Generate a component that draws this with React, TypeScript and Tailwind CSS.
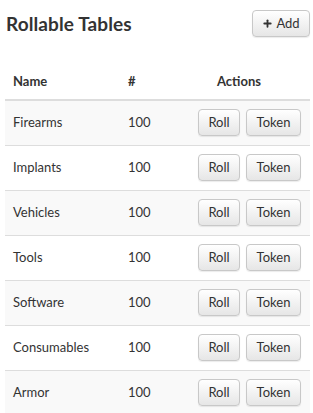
import { Plus } from "lucide-react";

const ROWS = [
  { name: "Firearms", count: 100 },
  { name: "Implants", count: 100 },
  { name: "Vehicles", count: 100 },
  { name: "Tools", count: 100 },
  { name: "Software", count: 100 },
  { name: "Consumables", count: 100 },
  { name: "Armor", count: 100 },
];

const btn =
  "rounded-[4px] border border-[#c8c8c8] bg-gradient-to-b from-white to-[#e6e6e6] text-[13px] text-[#333] shadow-[0_1px_1px_rgba(0,0,0,0.08)]";

export default function App() {
  return (
    <div className="w-[313px] h-[413px] overflow-hidden bg-white font-['Lato',sans-serif] text-[#333]">
      <div className="flex items-center justify-between pl-[6px] pr-[3px] pt-[10px]">
        <h1 className="text-[19px] font-bold leading-[27px] text-[#333] tracking-[0.1px]">Rollable Tables</h1>
        <button type="button" className={`${btn} flex h-[27px] w-[58px] items-center justify-center gap-[3px]`}>
          <Plus className="h-[11px] w-[11px]" strokeWidth={4} />
          Add
        </button>
      </div>

      <table className="mx-[5px] mt-[28px] w-[305px] border-collapse text-[13px]">
        <thead>
          <tr className="border-b-2 border-[#ddd]">
            <th className="h-[35px] w-[123px] pl-[8px] text-left font-bold">Name</th>
            <th className="w-[70px] text-left font-bold">#</th>
            <th className="pr-[30px] text-center font-bold">Actions</th>
          </tr>
        </thead>
        <tbody>
          {ROWS.map((row, i) => (
            <tr key={row.name} className={`border-b border-[#ddd] ${i % 2 === 0 ? "bg-[#f9f9f9]" : "bg-white"}`}>
              <td className="h-[45px] pl-[8px]">{row.name}</td>
              <td>{row.count}</td>
              <td className="pr-[9px]">
                <div className="flex justify-end gap-[6px]">
                  <button type="button" className={`${btn} h-[27px] w-[42px]`}>
                    Roll
                  </button>
                  <button type="button" className={`${btn} h-[27px] w-[55px]`}>
                    Token
                  </button>
                </div>
              </td>
            </tr>
          ))}
        </tbody>
      </table>
    </div>
  );
}
